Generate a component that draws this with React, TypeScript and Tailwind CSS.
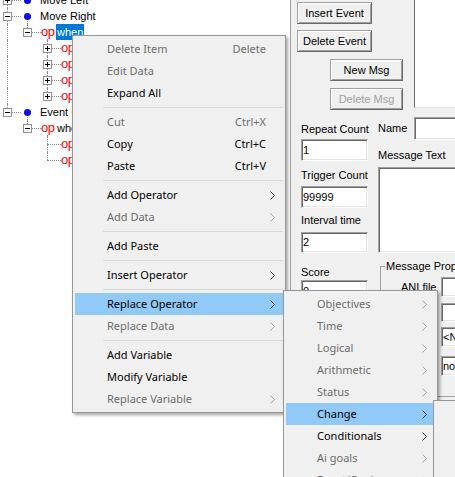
import React from "react";
import clsx from "clsx";

type Guide = "none" | "full" | "top" | "bottom";

type TreeRow = {
  level: number;
  toggle: "plus" | "minus" | "leaf";
  icon: "dot" | "op";
  label: string;
  selected?: boolean;
  guides: Guide[]; // one entry per indent column, plus the icon column
};

const treeRows: TreeRow[] = [
  { level: 0, toggle: "plus", icon: "dot", label: "Move Left", guides: ["full", "none"] },
  { level: 0, toggle: "minus", icon: "dot", label: "Move Right", guides: ["full", "bottom"] },
  { level: 1, toggle: "minus", icon: "op", label: "when", selected: true, guides: ["full", "top", "bottom"] },
  { level: 2, toggle: "plus", icon: "op", label: "", guides: ["full", "none", "full", "none"] },
  { level: 2, toggle: "plus", icon: "op", label: "", guides: ["full", "none", "full", "none"] },
  { level: 2, toggle: "plus", icon: "op", label: "", guides: ["full", "none", "full", "none"] },
  { level: 2, toggle: "plus", icon: "op", label: "", guides: ["full", "none", "top", "none"] },
  { level: 0, toggle: "minus", icon: "dot", label: "Event name", guides: ["top", "bottom"] },
  { level: 1, toggle: "minus", icon: "op", label: "when", guides: ["none", "top", "bottom"] },
  { level: 2, toggle: "leaf", icon: "op", label: "", guides: ["none", "none", "full", "none"] },
  { level: 2, toggle: "leaf", icon: "op", label: "", guides: ["none", "none", "top", "none"] },
];

type MenuEntry =
  | { sep: true }
  | { sep?: false; label: string; shortcut?: string; sub?: boolean; disabled?: boolean; active?: boolean };

const contextItems: MenuEntry[] = [
  { label: "Delete Item", shortcut: "Delete", disabled: true },
  { label: "Edit Data", disabled: true },
  { label: "Expand All" },
  { sep: true },
  { label: "Cut", shortcut: "Ctrl+X", disabled: true },
  { label: "Copy", shortcut: "Ctrl+C" },
  { label: "Paste", shortcut: "Ctrl+V" },
  { sep: true },
  { label: "Add Operator", sub: true },
  { label: "Add Data", sub: true, disabled: true },
  { sep: true },
  { label: "Add Paste" },
  { sep: true },
  { label: "Insert Operator", sub: true },
  { sep: true },
  { label: "Replace Operator", sub: true, active: true },
  { label: "Replace Data", sub: true, disabled: true },
  { sep: true },
  { label: "Add Variable" },
  { label: "Modify Variable" },
  { label: "Replace Variable", sub: true, disabled: true },
];

const operatorItems: MenuEntry[] = [
  { label: "Objectives", sub: true, disabled: true },
  { label: "Time", sub: true, disabled: true },
  { label: "Logical", sub: true, disabled: true },
  { label: "Arithmetic", sub: true, disabled: true },
  { label: "Status", sub: true, disabled: true },
  { label: "Change", sub: true, active: true },
  { label: "Conditionals", sub: true },
  { label: "Ai goals", sub: true, disabled: true },
  { label: "Event/Goals", sub: true, disabled: true },
];

const TreeCell = ({ guide, toggle, hline }: { guide: Guide; toggle?: TreeRow["toggle"]; hline?: boolean }) => (
  <div className="relative h-[16px] w-[20px] shrink-0">
    {guide === "full" && <div className="absolute left-[10px] top-0 h-[16px] border-l border-dotted border-[#8c8c8c]" />}
    {guide === "top" && <div className="absolute left-[10px] top-0 h-[8px] border-l border-dotted border-[#8c8c8c]" />}
    {guide === "bottom" && <div className="absolute left-[10px] top-[8px] h-[8px] border-l border-dotted border-[#8c8c8c]" />}
    {hline && <div className="absolute left-[10px] top-[8px] w-[14px] border-t border-dotted border-[#8c8c8c]" />}
    {toggle && toggle !== "leaf" && (
      <div className="absolute left-[6px] top-[4px] h-[9px] w-[9px] border border-[#919191] bg-white">
        <div className="absolute left-[1px] top-[3px] h-px w-[5px] bg-black" />
        {toggle === "plus" && <div className="absolute left-[3px] top-[1px] h-[5px] w-px bg-black" />}
      </div>
    )}
  </div>
);

const TreeLine = ({ row }: { row: TreeRow }) => {
  const cells = [];
  for (let c = 0; c < row.level; c++) cells.push(<TreeCell key={c} guide={row.guides[c]} />);
  return (
    <div className="flex h-[16px] items-center whitespace-nowrap">
      {cells}
      <TreeCell guide={row.guides[row.level]} toggle={row.toggle} hline />
      <div className="relative z-10 flex h-[16px] w-[20px] shrink-0 items-center">
        {row.guides[row.level + 1] === "bottom" && (
          <div className="absolute left-[10px] top-[8px] h-[8px] border-l border-dotted border-[#8c8c8c]" />
        )}
        {row.icon === "dot" ? (
          <div className="relative ml-[7px] h-[7px] w-[7px] rounded-full bg-[#0a0ae6]" />
        ) : (
          <span className="relative ml-[4px] bg-white text-[13px] leading-[14px] tracking-[-0.5px] text-[#ff0000]">op</span>
        )}
      </div>
      {row.label && (
        <span
          className={clsx(
            "h-[16px] px-[1px] leading-[16px]",
            row.icon === "dot" ? "ml-[2px]" : "-ml-[1px]",
            row.selected && "bg-[#0078d7] text-white",
          )}
        >
          {row.label}
        </span>
      )}
    </div>
  );
};

const Chevron = () => (
  <svg width="5" height="9" viewBox="0 0 5 9" className="shrink-0">
    <polyline points="0.5,0.5 4.5,4.5 0.5,8.5" fill="none" stroke="currentColor" strokeWidth="1" />
  </svg>
);

const MenuList = ({ items, indent }: { items: MenuEntry[]; indent: string }) => (
  <>
    {items.map((it, i) =>
      it.sep ? (
        <div key={i} className="flex h-[7px] items-center pl-[28px]">
          <div className="h-px flex-1 bg-[#d7d7d7]" />
        </div>
      ) : (
        <div
          key={i}
          className={clsx(
            "flex h-[22px] items-center pr-[8px]",
            indent,
            it.active && "bg-[#91c9f7]",
            it.disabled ? "text-[#6d6d6d]" : "text-black",
          )}
        >
          <span className="flex-1">{it.label}</span>
          {it.shortcut && <span className="mr-[9px]">{it.shortcut}</span>}
          {it.sub && (
            <span className={it.disabled ? "text-[#a6a6a6]" : "text-[#333]"}>
              <Chevron />
            </span>
          )}
        </div>
      ),
    )}
  </>
);

const Btn = ({ label, disabled, className }: { label: string; disabled?: boolean; className?: string }) => (
  <button
    type="button"
    className={clsx(
      "flex h-[22px] items-center justify-center border border-[#a0a0a0] border-b-[#696969] border-r-[#696969] bg-[#f0f0f0] shadow-[inset_1px_1px_0_#fff,inset_-1px_-1px_0_#a0a0a0]",
      disabled ? "text-[#a0a0a0]" : "text-black",
      className,
    )}
  >
    {label}
  </button>
);

const Field = ({ value, className }: { value?: string; className?: string }) => (
  <div
    className={clsx(
      "flex shrink-0 items-center border border-[#a0a0a0] border-b-white border-r-white bg-white pl-[1px] shadow-[inset_1px_1px_0_#696969,inset_-1px_-1px_0_#e3e3e3]",
      className,
    )}
  >
    {value}
  </div>
);

export default function App() {
  return (
    <div className="relative flex h-[477px] w-[455px] overflow-hidden bg-white font-['Liberation_Sans',Arial,sans-serif] text-[11px] text-black">
      {/* event tree */}
      <div className="w-[291px] shrink-0 overflow-hidden border-r border-[#a0a0a0] bg-white">
        <div className="-ml-[3px] -mt-[8px]">
          {treeRows.map((r, i) => (
            <TreeLine key={i} row={r} />
          ))}
        </div>
      </div>

      {/* editor panel */}
      <div className="min-w-0 flex-1 overflow-hidden bg-[#f0f0f0]">
        <div className="flex h-[111px]">
          <div className="flex w-[123px] shrink-0 flex-col items-start pl-[6px] pt-[2px]">
            <Btn label="Insert Event" className="w-[75px]" />
            <Btn label="Delete Event" className="mt-[6px] w-[75px]" />
            <Btn label="New Msg" className="ml-[33px] mt-[7px] w-[73px]" />
            <Btn label="Delete Msg" disabled className="ml-[33px] mt-[7px] w-[73px]" />
          </div>
          <div className="h-[108px] flex-1 border-b border-l border-b-[#e3e3e3] border-l-[#696969] bg-white" />
        </div>

        <div className="flex">
          <div className="ml-[10px] flex w-[67px] shrink-0 flex-col">
            <span className="mt-[11px] h-[14px] whitespace-nowrap leading-[14px]">Repeat Count</span>
            <Field value="1" className="mt-[3px] h-[22px]" />
            <span className="mt-[7px] h-[14px] whitespace-nowrap leading-[14px]">Trigger Count</span>
            <Field value="99999" className="mt-[4px] h-[22px]" />
            <span className="mt-[5px] h-[14px] whitespace-nowrap leading-[14px]">Interval time</span>
            <Field value="2" className="mt-[5px] h-[21px]" />
            <span className="mt-[12px] h-[14px] leading-[14px]">Score</span>
            <Field value="0" className="mt-[1px] h-[22px]" />
          </div>

          <div className="ml-[10px] flex min-w-0 flex-1 flex-col">
            <div className="mt-[6px] flex h-[23px] items-center">
              <span className="w-[36px] shrink-0">Name</span>
              <Field className="h-[23px] w-[60px]" />
            </div>
            <span className="mt-[8px] h-[14px] whitespace-nowrap leading-[14px]">Message Text</span>
            <Field className="mt-[5px] h-[86px] w-[90px]" />
            <fieldset className="ml-[2px] mt-[6px] w-[110px] min-w-0 shrink-0 border border-[#a0a0a0] pb-[20px]">
              <legend className="ml-[4px] h-[14px] whitespace-nowrap px-[1px] leading-[14px]">Message Properties</legend>
              <div className="mt-[4px] flex items-center">
                <span className="w-[60px] shrink-0 pl-[20px]">ANI file</span>
                <Field className="h-[20px] w-[50px]" />
              </div>
              <Field className="ml-[60px] mt-[6px] h-[19px] w-[50px]" />
              <Field value="<None>" className="ml-[60px] mt-[5px] h-[20px] w-[50px]" />
              <Field value="none" className="ml-[60px] mt-[9px] h-[20px] w-[50px]" />
            </fieldset>
          </div>
        </div>
      </div>

      {/* tree context menu */}
      <div className="absolute left-[72px] top-[35px] z-20 w-[214px] border border-[#979797] bg-[#f0f0f0] px-[2px] py-[2px] font-['Noto_Sans',sans-serif] text-[11px] shadow-[2px_2px_3px_rgba(0,0,0,0.35)]">
        <MenuList items={contextItems} indent="pl-[32px]" />
      </div>

      {/* Replace Operator submenu */}
      <div className="absolute left-[283px] top-[290px] z-30 w-[155px] border border-[#979797] bg-[#f0f0f0] px-[2px] pt-[2px] font-['Noto_Sans',sans-serif] text-[11px] shadow-[2px_2px_3px_rgba(0,0,0,0.35)]">
        <MenuList items={operatorItems} indent="pl-[31px]" />
      </div>

      {/* Change submenu */}
      <div className="absolute left-[433px] top-[400px] z-40 h-[120px] w-[60px] border border-[#979797] bg-[#f0f0f0]" />
    </div>
  );
}
